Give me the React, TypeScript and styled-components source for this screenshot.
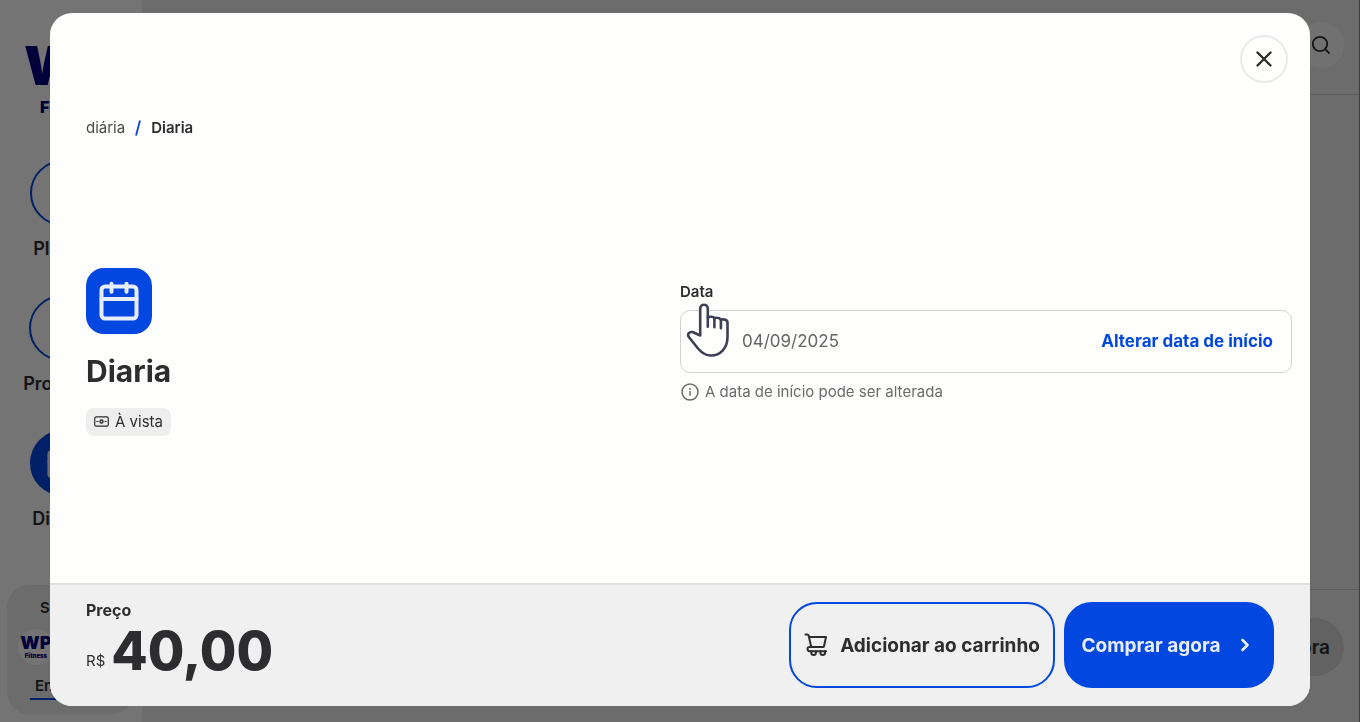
import React from "react";
import styled, { createGlobalStyle, css } from "styled-components";

const blue = "#0247e0";
const ink = "#2d2d2f";

const GlobalStyle = createGlobalStyle`
  *, *::before, *::after { box-sizing: border-box; }
  html, body { margin: 0; height: 100%; }
  #root { min-height: 100%; }
  body { font-family: Inter, "Liberation Sans", sans-serif; color: ${ink}; background: #ebebeb; overflow: hidden; }
  button, input { font: inherit; color: inherit; }
  button { cursor: pointer; }
  h1, p { margin: 0; }
`;

/* Store page behind the dialog */
const Page = styled.div`
  display: flex;
  height: 100vh;
`;

const Sidebar = styled.aside`
  width: 142px;
  flex: none;
  display: flex;
  flex-direction: column;
  background: #fdfdfd;
  padding: 38px 8px 8px 7px;
`;

const Logo = styled.div`
  display: flex;
  flex-direction: column;
  padding: 0 0 0 17px;
  color: #000080;
  font-weight: 900;
`;

const LogoMark = styled.span`
  font-size: 54px;
  line-height: 56px;
`;

const LogoName = styled.span`
  padding-left: 16px;
  font-size: 16px;
  line-height: 26px;
`;

const Nav = styled.nav`
  display: flex;
  flex-direction: column;
  align-items: center;
  gap: 33px;
  padding: 40px 16px 0 0;
`;

const NavItem = styled.a`
  display: flex;
  flex-direction: column;
  align-items: center;
  gap: 10px;
  color: ${ink};
  text-decoration: none;
  font-size: 18px;
  font-weight: 600;
  line-height: 26px;
`;

const NavRing = styled.span<{ $active?: boolean }>`
  display: grid;
  place-items: center;
  width: 66px;
  height: 66px;
  border: 2px solid ${blue};
  border-radius: 50%;
  color: #e8ecfa;
  ${(p) => p.$active && css`background: ${blue};`}
`;

const Account = styled.div`
  display: flex;
  flex-direction: column;
  gap: 9px;
  height: 129px;
  margin-top: auto;
  padding: 11px 14px 0 11px;
  border-radius: 22px;
  background: #ebebeb;
  font-size: 15px;
  font-weight: 600;
  line-height: 24px;
`;

const AccountTitle = styled.span`
  padding-left: 22px;
`;

const Avatar = styled.span`
  display: flex;
  flex-direction: column;
  align-items: center;
  justify-content: center;
  width: 36px;
  height: 36px;
  border-radius: 50%;
  background: #fdfdfd;
  color: #000080;
  font-size: 18px;
  font-weight: 900;
  line-height: 18px;

  small {
    font-size: 6px;
    line-height: 8px;
  }
`;

const SignIn = styled.a`
  align-self: flex-start;
  margin-left: 12px;
  padding: 0 5px;
  border-bottom: 2px solid ${blue};
  color: ${ink};
  text-decoration: none;
`;

const Store = styled.main`
  flex: 1;
  display: flex;
  flex-direction: column;
  border-right: 1px solid #8a8a8a;
`;

const StoreBar = styled.header`
  display: flex;
  justify-content: flex-end;
  padding: 22px 15px 26px;
  border-bottom: 1px solid #c4c4c8;
`;

const SearchButton = styled.button`
  display: grid;
  place-items: center;
  width: 46px;
  height: 46px;
  padding: 0;
  border: 0;
  border-radius: 50%;
  background: #f7f7f7;
`;

const StoreFooter = styled.footer`
  display: flex;
  justify-content: flex-end;
  height: 133px;
  margin-top: auto;
  padding: 28px 15px;
  border-top: 1px solid #c4c4c8;
`;

const StoreBuy = styled.button`
  height: 58px;
  min-width: 120px;
  padding: 0 14px;
  border: 0;
  border-radius: 29px;
  background: #d5d5d5;
  font-size: 19px;
  font-weight: 600;
  text-align: right;
`;

/* Dialog */
const Backdrop = styled.div`
  position: fixed;
  inset: 0;
  display: flex;
  padding: 13px 50px 16px;
  background: rgba(0, 0, 0, 0.54);
`;

const Dialog = styled.section`
  flex: 1;
  display: flex;
  flex-direction: column;
  border-radius: 22px;
  overflow: hidden;
  background: #fefefd;
`;

const DialogTop = styled.div`
  display: flex;
  justify-content: flex-end;
  padding: 22px 22px 0;
`;

const CloseButton = styled.button`
  display: grid;
  place-items: center;
  width: 48px;
  height: 48px;
  padding: 0;
  border: 2px solid #e9e9ed;
  border-radius: 50%;
  background: transparent;
`;

const Crumbs = styled.nav`
  display: flex;
  align-items: center;
  gap: 10px;
  padding: 35px 36px 0;
  font-size: 15px;
  line-height: 20px;

  a { color: #4a4a4c; text-decoration: none; }
  strong { font-weight: 600; }
  svg { display: block; }
`;

const Content = styled.div`
  flex: 1;
  display: grid;
  grid-template-columns: 33fr 34fr;
  align-items: center;
  padding: 0 18px 18px 36px;
`;

const Product = styled.div`
  display: flex;
  flex-direction: column;
  align-items: flex-start;
`;

const ProductIcon = styled.span`
  display: grid;
  place-items: center;
  width: 66px;
  height: 66px;
  border-radius: 18px;
  background: ${blue};
`;

const ProductName = styled.h1`
  margin: 18px 0;
  font-size: 30px;
  font-weight: 700;
  line-height: 38px;
`;

const Tag = styled.span`
  display: flex;
  align-items: center;
  gap: 6px;
  padding: 0 8px;
  border-radius: 8px;
  background: #eeeeef;
  font-size: 15px;
  line-height: 28px;
`;

const DateGroup = styled.div`
  display: flex;
  flex-direction: column;
  padding-bottom: 20px;
`;

const FieldLabel = styled.label`
  margin-bottom: 8px;
  font-size: 15px;
  font-weight: 600;
  line-height: 20px;
`;

const Field = styled.div`
  position: relative;
  display: flex;
  align-items: center;
  height: 63px;
  padding: 0 18px 0 61px;
  border: 1px solid #d2d2d4;
  border-radius: 10px;
`;

const DateInput = styled.input`
  flex: 1;
  min-width: 0;
  padding: 0;
  border: 0;
  outline: 0;
  background: transparent;
  color: #656567;
  font-size: 17px;
`;

const LinkButton = styled.button`
  padding: 0;
  border: 0;
  background: transparent;
  color: ${blue};
  font-size: 17px;
  font-weight: 700;
  white-space: nowrap;
`;

const Pointer = styled.svg`
  position: absolute;
  left: 5px;
  top: -8px;
`;

const Hint = styled.p`
  display: flex;
  align-items: center;
  gap: 5px;
  margin-top: 9px;
  color: #6b6b6d;
  font-size: 15px;
  line-height: 20px;
`;

const DialogFooter = styled.footer`
  display: flex;
  justify-content: space-between;
  align-items: flex-start;
  padding: 14px 36px 18px;
  border-top: 2px solid #dfdfe1;
  background: #f0f0f0;
`;

const Price = styled.div`
  display: flex;
  flex-direction: column;
`;

const PriceLabel = styled.span`
  font-size: 16px;
  font-weight: 700;
  line-height: 22px;
`;

const PriceValue = styled.div`
  display: flex;
  align-items: flex-end;
  gap: 6px;
  font-size: 15px;
  line-height: 40px;

  strong { font-size: 53px; font-weight: 800; line-height: 60px; }
`;

const Actions = styled.div`
  display: flex;
  gap: 9px;
  padding-top: 3px;
`;

const ActionButton = styled.button<{ $primary?: boolean }>`
  display: flex;
  align-items: center;
  justify-content: center;
  gap: 12px;
  width: ${(p) => (p.$primary ? 210 : 266)}px;
  height: 86px;
  padding: 0;
  border: 2px solid ${blue};
  border-radius: 28px;
  background: ${(p) => (p.$primary ? blue : "transparent")};
  color: ${(p) => (p.$primary ? "#e8edfb" : ink)};
  font-size: 19px;
  font-weight: 700;
  white-space: nowrap;
`;

const CalendarIcon = ({ size = 40 }: { size?: number }) => (
  <svg width={size} height={size} viewBox="0 0 40 40" fill="none" stroke="#e8edfb" strokeWidth="4" strokeLinecap="round" strokeLinejoin="round" aria-hidden="true">
    <rect x="2.500" y="5.500" width="35" height="32" rx="3.500" />
    <path d="M2.500 18h35M12.500 2.800v8M27.500 2.800v8" />
  </svg>
);

const SearchIcon = () => (
  <svg width="20" height="20" viewBox="0 0 20 20" fill="none" stroke="currentColor" strokeWidth="1.800" strokeLinecap="round" aria-hidden="true">
    <circle cx="9" cy="9" r="7.200" />
    <path d="M14.200 14.200l3.800 3.800" />
  </svg>
);

const CartIcon = () => (
  <svg width="24" height="24" viewBox="0 0 24 24" fill="none" stroke="currentColor" strokeWidth="2" strokeLinecap="round" strokeLinejoin="round" aria-hidden="true">
    <path d="M1.500 1.500h1.700c.8 0 1.300.4 1.500 1.200L7.200 14M5.300 4H22l-2 9.200c-.1.500-.5.800-1 .8H5.600a2.100 2.100 0 0 0 0 4.200H22" />
    <path d="M7.300 18.200v1.600a2.300 2.300 0 0 0 4.600 0v-1.600M16.400 18.200v1.600a2.300 2.300 0 0 0 4.600 0v-1.600" />
  </svg>
);

const CashIcon = () => (
  <svg width="15" height="11" viewBox="0 0 15 11" fill="none" stroke="currentColor" strokeWidth="1.200" aria-hidden="true">
    <rect x="0.700" y="0.900" width="13.600" height="9.200" rx="1.600" />
    <circle cx="7.500" cy="5.500" r="1.500" strokeWidth="1.400" />
    <path d="M2.800 5.500h1.200M11 5.500h1.200" strokeLinecap="round" />
  </svg>
);

const InfoIcon = () => (
  <svg width="20" height="20" viewBox="0 0 20 20" fill="none" stroke="currentColor" strokeWidth="1.500" aria-hidden="true">
    <circle cx="10" cy="10" r="8" />
    <path d="M10 9v4.800M10 6.100v1.600" />
  </svg>
);

const HandPointer = () => (
  <Pointer width="46" height="58" viewBox="0 0 46 58" fill="#fefefd" stroke="#3d3f52" strokeWidth="2.600" strokeLinecap="round" strokeLinejoin="round" aria-hidden="true">
    <path d="M14.200 32.500V5.500c0-5 7.600-5 7.600 0v8.700c2-.8 5.400-.6 6.600.8 2.400-.4 5.200 0 6.400 1.600 3.200-.6 6.700.2 6.700 3V34c0 11.500-7.500 18.500-16.500 18.500-5.500 0-9.500-3-13-7L3.200 34.500c-2.600-3.500.3-6.500 4-5.200z" />
    <path d="M21.800 14.200v9.600M28.400 15.500v8.800M34.900 17v8.300" fill="none" />
  </Pointer>
);

export default function App() {
  return (
    <>
      <GlobalStyle />
      <Page>
        <Sidebar>
          <Logo>
            <LogoMark>WP</LogoMark>
            <LogoName>Fitness</LogoName>
          </Logo>
          <Nav>
            <NavItem href="#planos"><NavRing />Planos</NavItem>
            <NavItem href="#produtos"><NavRing />Produtos</NavItem>
            <NavItem href="#diaria"><NavRing $active><CalendarIcon size={32} /></NavRing>Diárias</NavItem>
          </Nav>
          <Account>
            <AccountTitle>Saldo</AccountTitle>
            <Avatar>WP<small>Fitness</small></Avatar>
            <SignIn href="#entrar">Entrar</SignIn>
          </Account>
        </Sidebar>
        <Store>
          <StoreBar>
            <SearchButton aria-label="Buscar"><SearchIcon /></SearchButton>
          </StoreBar>
          <StoreFooter>
            <StoreBuy>Compra</StoreBuy>
          </StoreFooter>
        </Store>
      </Page>

      <Backdrop>
        <Dialog role="dialog" aria-modal="true" aria-labelledby="product-name">
          <DialogTop>
            <CloseButton aria-label="Fechar">
              <svg width="16" height="16" viewBox="0 0 16 16" fill="none" stroke="currentColor" strokeWidth="2.400" strokeLinecap="round" aria-hidden="true">
                <path d="M1.500 1.500l13 13M14.500 1.500l-13 13" />
              </svg>
            </CloseButton>
          </DialogTop>
          <Crumbs aria-label="Navegação">
            <a href="#diaria">diária</a>
            <svg width="6" height="16" viewBox="0 0 6 16" stroke={blue} strokeWidth="1.800" aria-hidden="true">
              <path d="M5 .5L1 15.500" />
            </svg>
            <strong>Diaria</strong>
          </Crumbs>
          <Content>
            <Product>
              <ProductIcon><CalendarIcon /></ProductIcon>
              <ProductName id="product-name">Diaria</ProductName>
              <Tag><CashIcon />À vista</Tag>
            </Product>
            <DateGroup>
              <FieldLabel htmlFor="start-date">Data</FieldLabel>
              <Field>
                <DateInput id="start-date" type="text" readOnly value="04/09/2025" />
                <LinkButton type="button">Alterar data de início</LinkButton>
                <HandPointer />
              </Field>
              <Hint><InfoIcon />A data de início pode ser alterada</Hint>
            </DateGroup>
          </Content>
          <DialogFooter>
            <Price>
              <PriceLabel>Preço</PriceLabel>
              <PriceValue>R$ <strong>40,00</strong></PriceValue>
            </Price>
            <Actions>
              <ActionButton type="button"><CartIcon />Adicionar ao carrinho</ActionButton>
              <ActionButton type="button" $primary>
                Comprar agora
                <svg width="24" height="24" viewBox="0 0 24 24" fill="none" stroke="currentColor" strokeWidth="2.600" strokeLinecap="round" strokeLinejoin="round" aria-hidden="true">
                  <path d="M10.500 7l5 5-5 5" />
                </svg>
              </ActionButton>
            </Actions>
          </DialogFooter>
        </Dialog>
      </Backdrop>
    </>
  );
}
